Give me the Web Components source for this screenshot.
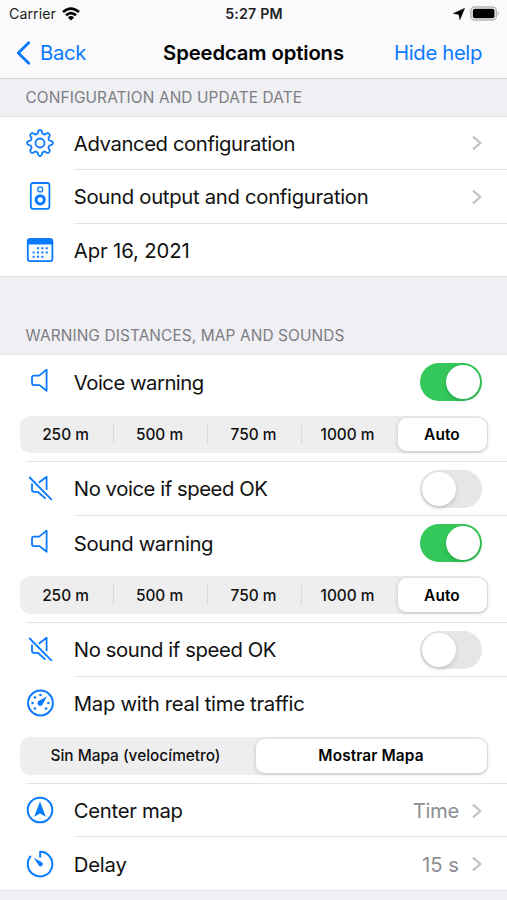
<!DOCTYPE html>
<html lang="en">
<head>
<meta charset="utf-8">
<meta name="viewport" content="width=device-width">
<title>Speedcam options</title>
<style>
  body {
    margin: 0;
    height: 900px;
    overflow: hidden;
    background: #efeff4;
    color: #111;
    font-family: Inter, "Liberation Sans", sans-serif;
  }
</style>
</head>
<body>
<options-screen></options-screen>

<script>
const blue = '#0a7aff';

const icons = {
  gear: `<path d="M12.2 2.2 Q14 -.2 15.8 2.2 L16.5 4.7 L18.8 5.6 L21 4.2 Q24 3.9 23.7 7 L22.3 9.2 L23.3 11.5 L25.8 12.2 Q28.2 14 25.8 15.8 L23.3 16.5 L22.3 18.8 L23.7 21 Q24 24.1 21 23.8 L18.8 22.4 L16.5 23.3 L15.8 25.8 Q14 28.2 12.2 25.8 L11.5 23.3 L9.2 22.4 L7 23.8 Q4 24.1 4.3 21 L5.7 18.8 L4.7 16.5 L2.2 15.8 Q-.2 14 2.2 12.2 L4.7 11.5 L5.7 9.2 L4.3 7 Q4 3.9 7 4.2 L9.2 5.6 L11.5 4.7Z"/><circle cx="14" cy="14" r="4.5"/>`,
  speaker: `<rect x="4.8" y="1" width="18.6" height="25.8" rx="2.2"/><circle cx="14.2" cy="7.4" r="2.5" stroke-width="1.3"/><circle cx="14.2" cy="17.8" r="4.1" stroke-width="3"/>`,
  calendar: `<rect x="1.8" y="3.2" width="24.6" height="22" rx="2.4"/><path d="M2 5Q2 3.2 4 3.2H24.2Q26.2 3.2 26.2 5V7.5H2Z" fill="${blue}"/><g fill="${blue}" stroke="none"><path d="M11 11.2h2v2h-2zm4.4 0h2v2h-2zm4.4 0h2v2h-2zM6.6 15.5h2v2h-2zm4.4 0h2v2h-2zm4.4 0h2v2h-2zm4.4 0h2v2h-2zM6.6 19.8h2v2h-2zm4.4 0h2v2h-2zm4.4 0h2v2h-2z"/></g>`,
  voice: `<path d="M20.6 2.6V23.8L13.6 18.1H8Q6 18.1 6 16V10.7Q6 8.6 8 8.6H13.2Z"/>`,
  mute: `<path d="M3.2 3L25.8 25.8M6 9.6V15.8Q6 17.8 8 17.8H11.7L19.6 24.6M12.8 8.8L20.6 2.8V16"/>`,
  gauge: `<circle cx="14.5" cy="14" r="12.4" stroke-width="2"/><g fill="${blue}" stroke="none"><circle cx="14.5" cy="6" r="1.3"/><circle cx="8.9" cy="8.5" r="1.3"/><circle cx="6.6" cy="14" r="1.3"/><circle cx="8.9" cy="19.5" r="1.3"/><circle cx="20.1" cy="19.5" r="1.3"/><circle cx="22.4" cy="14" r="1.3"/><path d="M20.9 7.4L16.8 15A2.7 2.7 0 1 1 13 11.8Z"/></g>`,
  compass: `<circle cx="14" cy="14" r="12.3" stroke-width="2"/><path d="M14 5.6L19.8 20.8L14 17.4L8.2 20.8Z" fill="${blue}" stroke="none"/>`,
  timer: `<path d="M14.2 7.4V1.8A12.3 12.3 0 1 1 4.9 5.9" stroke-width="2"/><path d="M7.8 7.7L16.2 12.6A2.1 2.1 0 0 1 13 15.7Z" fill="${blue}" stroke="none"/>`
};

class RowIcon extends HTMLElement {
  constructor() {
    super();
    this.attachShadow({ mode: 'open' });
  }

  connectedCallback() {
    this.shadowRoot.innerHTML = `
      <style>
        :host { display: block; width: 28px; height: 28px; }
        svg { display: block; overflow: visible; }
      </style>
      <svg width="28" height="28" viewBox="0 0 28 28" fill="none" stroke="${blue}"
        stroke-width="1.8" stroke-linejoin="round">${icons[this.getAttribute('name')]}</svg>
    `;
  }
}

const statusTemplate = document.createElement('template');

statusTemplate.innerHTML = `
  <style>
    :host {
      display: grid;
      grid-template-columns: 1fr auto 1fr;
      align-items: center;
      height: 27px;
      padding: 0 7px 0 9px;
      color: #222;
      font-size: 14.2px;
    }
    .left, .right { display: flex; align-items: center; }
    .left { gap: 6px; }
    .right { justify-content: flex-end; gap: 5px; }
    .carrier { letter-spacing: .05px; }
    .time { font-weight: 600; letter-spacing: .2px; margin-right: 1px; }
    svg { display: block; }
  </style>
  <div class="left">
    <span class="carrier">Carrier</span>
    <svg width="18" height="14" viewBox="0 0 18 14" fill="none" stroke="#000" stroke-width="2.6">
      <path d="M1 5.1Q9 -1.9 17 5.1M4 8.3Q9 4 14 8.3"/>
      <path d="M5.9 10.4Q9 7.8 12.1 10.4L9 13.6Z" fill="#000" stroke="none"/>
    </svg>
  </div>
  <span class="time">5:27 PM</span>
  <div class="right">
    <svg width="12" height="12" viewBox="0 0 12 12"><path d="M11.7 .2L6.9 11.8L5.8 6.5L.2 5.4Z" stroke="#000" stroke-width=".4"/></svg>
    <svg width="30" height="15" viewBox="0 0 30 15">
      <rect x=".9" y=".9" width="25.4" height="13.2" rx="4" fill="#fff" stroke="#b5b5b5" stroke-width="1.5"/>
      <rect x="2.8" y="2.8" width="21.7" height="9.4" rx="2"/>
      <path d="M27.6 5Q30 7.5 27.6 10Z" fill="#aaa"/>
    </svg>
  </div>
`;

class StatusBar extends HTMLElement {
  constructor() {
    super();
    this.attachShadow({ mode: 'open' }).appendChild(statusTemplate.content.cloneNode(true));
  }
}

const navTemplate = document.createElement('template');

navTemplate.innerHTML = `
  <style>
    :host {
      display: grid;
      grid-template-columns: 1fr auto 1fr;
      align-items: center;
      height: 51px;
      padding: 0 25px;
      border-bottom: 1px solid #d5d5d9;
      font-size: 20.3px;
      color: ${blue};
    }
    .back { display: flex; align-items: center; gap: 10px; margin-left: -9px; letter-spacing: -.3px; }
    .title { color: #000; font-weight: 600; letter-spacing: -.13px; }
    .action { text-align: right; letter-spacing: -.35px; }
    svg { display: block; }
  </style>
  <div class="back">
    <svg width="14" height="24" viewBox="0 0 14 24" fill="none" stroke="${blue}" stroke-width="2.8"
      stroke-linecap="round" stroke-linejoin="round"><path d="M12.7 1.7L2.3 12L12.7 22.3"/></svg>
    <slot name="back"></slot>
  </div>
  <div class="title"><slot></slot></div>
  <div class="action"><slot name="action"></slot></div>
`;

class NavBar extends HTMLElement {
  constructor() {
    super();
    this.attachShadow({ mode: 'open' }).appendChild(navTemplate.content.cloneNode(true));
  }
}

const sectionTemplate = document.createElement('template');

sectionTemplate.innerHTML = `
  <style>
    :host { display: block; }
    header {
      box-sizing: border-box;
      display: flex;
      align-items: flex-end;
      height: var(--head, 37.5px);
      padding: 0 25.5px 8.5px;
      border-bottom: 1px solid #e2e2e6;
      color: #7d7d82;
      font-size: 15.4px;
      line-height: 19px;
      letter-spacing: .12px;
    }
    .rows { background: #fff; }
  </style>
  <header><slot name="title"></slot></header>
  <div class="rows"><slot></slot></div>
`;

class OptionSection extends HTMLElement {
  constructor() {
    super();
    this.attachShadow({ mode: 'open' }).appendChild(sectionTemplate.content.cloneNode(true));
  }
}

const rowTemplate = document.createElement('template');

rowTemplate.innerHTML = `
  <style>
    :host { display: block; }
    :host([last]) { box-shadow: inset 0 -1px #e2e2e6; }
    .row {
      display: flex;
      height: 53.6px;
      padding-left: 26px;
      align-items: center;
    }
    row-icon { margin-top: -1px; }
    .main {
      flex: 1;
      display: flex;
      align-items: center;
      box-sizing: border-box;
      height: 100%;
      margin-left: 19.8px;
      padding: 1px 25px 0 0;
      border-bottom: 1px solid #e4e4e6;
      font-size: 20.3px;
    }
    .label { flex: 1; white-space: nowrap; letter-spacing: var(--track, -.4px); }
    .value { color: #8e8e93; letter-spacing: var(--value-track, 0); }
    .chevron { display: none; margin-left: 13px; }
    :host([link]) .chevron { display: block; }
    :host([last]) .main { border-bottom-color: transparent; }
    :host([tall]) .main { border-bottom-color: transparent; padding-top: 2px; }
    .below { display: none; }
    :host([tall]) .below {
      display: block;
      box-sizing: border-box;
      height: 53.6px;
      margin-left: 26px;
      padding-top: 7px;
      border-bottom: 1px solid #e4e4e6;
    }
  </style>
  <div class="row">
    <row-icon></row-icon>
    <div class="main">
      <span class="label"><slot></slot></span>
      <span class="value"><slot name="value"></slot></span>
      <svg class="chevron" width="10" height="16" viewBox="0 0 10 16" fill="none" stroke="#c2c2c6"
        stroke-width="2.2"><path d="M1 1.7L8.3 8L1 14.3"/></svg>
    </div>
  </div>
  <div class="below"><slot name="below"></slot></div>
`;

class OptionRow extends HTMLElement {
  constructor() {
    super();
    const content = rowTemplate.content.cloneNode(true);
    this.attachShadow({ mode: 'open' }).appendChild(content);
  }

  connectedCallback() {
    const icon = document.createElement('row-icon');
    icon.setAttribute('name', this.getAttribute('icon'));
    this.shadowRoot.querySelector('row-icon').replaceWith(icon);
  }
}

class ToggleSwitch extends HTMLElement {
  constructor() {
    super();
    this.attachShadow({ mode: 'open' }).innerHTML = `
      <style>
        :host {
          display: flex;
          box-sizing: border-box;
          width: 62.5px;
          height: 38px;
          padding: 2px;
          border-radius: 19px;
          background: #e6e6e8;
        }
        :host([on]) { background: #34c759; justify-content: flex-end; }
        i {
          width: 34px;
          height: 34px;
          border-radius: 50%;
          background: #fff;
          box-shadow: 0 2px 4px rgba(0, 0, 0, .16);
        }
      </style>
      <i></i>
    `;
  }
}

class SegmentControl extends HTMLElement {
  constructor() {
    super();
    this.attachShadow({ mode: 'open' });
  }

  connectedCallback() {
    const items = this.getAttribute('items').split('|');
    const cells = items.map((item, i) =>
      `<span class="${i == items.length - 1 ? 'on' : ''}">${item}</span>`).join('');
    this.shadowRoot.innerHTML = `
      <style>
        :host {
          display: flex;
          box-sizing: border-box;
          width: 468.5px;
          height: 37.5px;
          margin-left: -6.5px;
          padding: 2px 1.5px 2px 0;
          border-radius: 10px;
          background: #eeeeef;
          font-size: 15.4px;
          font-weight: 500;
        }
        span {
          flex: 1 1 0;
          display: flex;
          align-items: center;
          justify-content: center;
          padding-right: 2px;
          white-space: nowrap;
        }
        span:not(.on) {
          background: linear-gradient(#d9d9dc, #d9d9dc) right center / 1px 20px no-repeat;
        }
        span:nth-last-child(2) { background: none; }
        .on {
          flex: 0 0 var(--on, 89px);
          margin-left: 2px;
          padding: 0;
          border-radius: 8.5px;
          background: #fff;
          color: #000;
          font-weight: 600;
          letter-spacing: .12px;
          box-shadow: 0 1px 4px rgba(0, 0, 0, .2);
        }
      </style>
      ${cells}
    `;
  }
}

const screenTemplate = document.createElement('template');

screenTemplate.innerHTML = `
  <style>
    :host { display: block; width: 507px; }
    .top { background: #fafafc; }
  </style>
  <div class="top">
    <status-bar></status-bar>
    <nav-bar>
      <span slot="back">Back</span>
      Speedcam options
      <span slot="action">Hide help</span>
    </nav-bar>
  </div>
  <option-section>
    <span slot="title">CONFIGURATION AND UPDATE DATE</span>
    <option-row icon="gear" link>Advanced configuration</option-row>
    <option-row icon="speaker" link style="--track: -.3px">Sound output and configuration</option-row>
    <option-row icon="calendar" last style="--track: -.12px">Apr 16, 2021</option-row>
  </option-section>
  <option-section style="--head: 77.7px">
    <span slot="title">WARNING DISTANCES, MAP AND SOUNDS</span>
    <option-row icon="voice" tall style="--track: -.5px">Voice warning
      <toggle-switch slot="value" on></toggle-switch>
      <segment-control slot="below" items="250 m|500 m|750 m|1000 m|Auto"></segment-control>
    </option-row>
    <option-row icon="mute" style="--track: -.44px">No voice if speed OK
      <toggle-switch slot="value"></toggle-switch>
    </option-row>
    <option-row icon="voice" tall>Sound warning
      <toggle-switch slot="value" on></toggle-switch>
      <segment-control slot="below" items="250 m|500 m|750 m|1000 m|Auto"></segment-control>
    </option-row>
    <option-row icon="mute">No sound if speed OK
      <toggle-switch slot="value"></toggle-switch>
    </option-row>
    <option-row icon="gauge" tall style="--track: -.29px">Map with real time traffic
      <segment-control slot="below" style="--on: 231px" items="Sin Mapa (velocímetro)|Mostrar Mapa"></segment-control>
    </option-row>
    <option-row icon="compass" link style="--track: -.3px; --value-track: -.35px">Center map<span slot="value">Time</span></option-row>
    <option-row icon="timer" link last style="--track: -.2px">Delay<span slot="value">15 s</span></option-row>
  </option-section>
`;

class OptionsScreen extends HTMLElement {
  constructor() {
    super();
    this.attachShadow({ mode: 'open' }).appendChild(screenTemplate.content.cloneNode(true));
  }
}

window.customElements.define('row-icon', RowIcon);
window.customElements.define('status-bar', StatusBar);
window.customElements.define('nav-bar', NavBar);
window.customElements.define('option-section', OptionSection);
window.customElements.define('option-row', OptionRow);
window.customElements.define('toggle-switch', ToggleSwitch);
window.customElements.define('segment-control', SegmentControl);
window.customElements.define('options-screen', OptionsScreen);
</script>
</body>
</html>
